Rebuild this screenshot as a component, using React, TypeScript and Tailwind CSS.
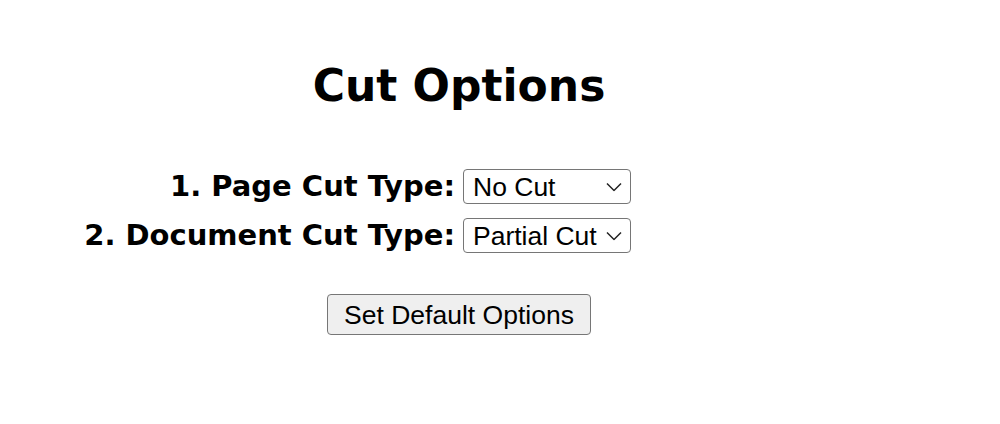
import React from "react";

function Chevron() {
  return (
    <svg
      className="pointer-events-none absolute right-[9px] top-1/2 -translate-y-1/2"
      width="16"
      height="9"
      viewBox="0 0 16 9"
      fill="none"
    >
      <path d="M1 1 L8 8 L15 1" stroke="#222" strokeWidth="1.5" />
    </svg>
  );
}

function Select({ value, options }: { value: string; options: string[] }) {
  return (
    <div className="relative w-[168px] h-[35px]">
      <select
        defaultValue={value}
        className="appearance-none w-full h-full border border-[#767676] rounded-[4px] bg-white text-black pl-[9px] pr-[26px] text-[26.5px] leading-[30px] outline-none font-['Liberation_Sans',Arial,sans-serif]"
      >
        {options.map((o) => (
          <option key={o}>{o}</option>
        ))}
      </select>
      <Chevron />
    </div>
  );
}

function Label({ children }: { children: React.ReactNode }) {
  return (
    <div className="text-right text-[29px] leading-[35px] font-bold text-black font-['DejaVu_Sans',sans-serif] whitespace-nowrap">
      {children}
    </div>
  );
}

export default function App() {
  const opts = ["No Cut", "Partial Cut", "Full Cut"];
  return (
    <div className="w-[918px] min-h-[424px] flex flex-col items-center pt-[60px] bg-white">
      <h1 className="text-[44px] leading-[52px] font-bold text-black font-['DejaVu_Sans',sans-serif]">
        Cut Options
      </h1>
      <div className="w-full grid grid-cols-2 gap-x-[8px] gap-y-[14px] mt-[57px]">
        <Label>1. Page Cut Type:</Label>
        <div>
          <Select value="No Cut" options={opts} />
        </div>
        <Label>2. Document Cut Type:</Label>
        <div>
          <Select value="Partial Cut" options={opts} />
        </div>
      </div>
      <button className="mt-[41px] w-[264px] h-[41px] border border-[#767676] rounded-[4px] bg-[#efefef] text-black text-[26.5px] leading-[30px] font-['Liberation_Sans',Arial,sans-serif]">
        Set Default Options
      </button>
    </div>
  );
}
